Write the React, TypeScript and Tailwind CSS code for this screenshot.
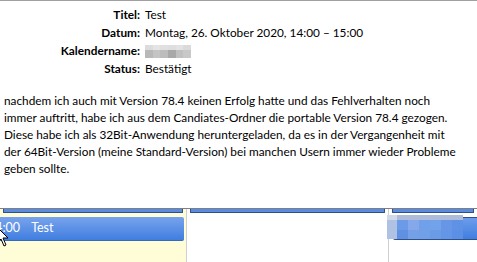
import React from 'react'

const font = { fontFamily: 'Lato, "Noto Sans", sans-serif' }

function Row({ label, children }: { label: string; children: React.ReactNode }) {
  return (
    <div className="flex h-[18px] items-center">
      <div className="w-[144px] shrink-0 pr-[4px] text-right font-bold">{label}</div>
      <div className="pl-[1px]">{children}</div>
    </div>
  )
}

function Pixelated() {
  const top = ['#dcdcdc', '#e4e4e4', '#e0e0e0', '#dedede', '#e2e2e2', '#dadada']
  const bottom = ['#b8b8b8', '#c4c4c4', '#bcbcbc', '#a8a8a8', '#c0c0c0', '#c8c8c8']
  return (
    <div className="flex h-[13px] w-[46px] flex-col">
      <div className="flex h-[5px]">
        {top.map((c, i) => (
          <div key={i} className="h-full w-[8px]" style={{ background: c }} />
        ))}
      </div>
      <div className="flex h-[8px]">
        {bottom.map((c, i) => (
          <div key={i} className="h-full w-[8px]" style={{ background: c }} />
        ))}
      </div>
    </div>
  )
}

function AllDayStrip() {
  return <div className="mx-[3px] h-[4px] rounded-b-[1px] border border-t-0 border-[#2d4f8a] bg-[#5a8be0]" />
}

export default function App() {
  const blurTop = ['#d2d9e8', '#aebbd9', '#aebbd9', '#aebbd9', '#aebbd9', '#aebbd9', '#aebbd9']
  const blurMid = ['#b0c2e4', '#6b9ae8', '#84a8ea', '#70a0ea', '#72a2ea', '#6796e6', '#5f92e6']
  const blurBot = ['#b0c2e4', '#5f90e2', '#74a0e6', '#72a0e8', '#6c9be6', '#6396e6', '#5b90e6']
  return (
    <div className="relative h-[262px] w-[477px] overflow-hidden bg-white text-[11.8px] text-black" style={font}>
      <div className="h-[1px] bg-[#a0a0a0]" />
      <div className="pt-[5px]">
        <Row label="Titel:">Test</Row>
        <Row label="Datum:">Montag, 26. Oktober 2020, 14:00 – 15:00</Row>
        <Row label="Kalendername:">
          <Pixelated />
        </Row>
        <Row label="Status:">Bestätigt</Row>
      </div>
      <div className="mt-[14px] h-[116px] whitespace-nowrap px-[4px] leading-[17px]">
        <p>nachdem ich auch mit Version 78.4 keinen Erfolg hatte und das Fehlverhalten noch</p>
        <p>immer auftritt, habe ich aus dem Candiates-Ordner die portable Version 78.4 gezogen.</p>
        <p>Diese habe ich als 32Bit-Anwendung heruntergeladen, da es in der Vergangenheit mit</p>
        <p>der 64Bit-Version (meine Standard-Version) bei manchen Usern immer wieder Probleme</p>
        <p>geben sollte.</p>
      </div>

      <div className="flex h-[54px] border-t border-[#808080]">
        <div className="w-[186px] shrink-0 bg-[#fffcd8]">
          <AllDayStrip />
          <div className="mt-[4px] mr-[2px] flex h-[24px] items-center overflow-hidden rounded-r-[2px] border-b border-[#3a68b8] bg-gradient-to-b from-[#78a3ec] to-[#3f7ee0] text-[12.5px] text-white">
            <span className="ml-[-12px]">14:00</span>
            <span className="ml-[11px]">Test</span>
          </div>
        </div>
        <div className="w-px bg-[#d0d0d0]" />
        <div className="w-[201px] shrink-0 bg-white">
          <AllDayStrip />
        </div>
        <div className="w-px bg-[#d0d0d0]" />
        <div className="relative flex-1 bg-white">
          <AllDayStrip />
          <div className="mt-[4px] ml-[4px] h-[23px] rounded-l-[2px] border-t border-b border-[#2d4f8a] bg-gradient-to-b from-[#6d9ceb] to-[#3f7ee0]" />
          <div className="absolute left-[-2px] top-[6px] flex flex-col">
            <div className="flex h-[5px]">
              {blurTop.map((c, i) => (
                <div key={i} className={i === 0 ? 'h-full w-[10px]' : 'h-full w-[11px]'} style={{ background: c }} />
              ))}
            </div>
            <div className="flex h-[10px]">
              {blurMid.map((c, i) => (
                <div key={i} className={i === 0 ? 'h-full w-[10px]' : 'h-full w-[11px]'} style={{ background: c }} />
              ))}
            </div>
            <div className="flex h-[9px]">
              {blurBot.map((c, i) => (
                <div key={i} className={i === 0 ? 'h-full w-[10px]' : 'h-full w-[11px]'} style={{ background: c }} />
              ))}
            </div>
          </div>
        </div>
      </div>

      <svg className="absolute left-[-4px] top-[226px]" width="14" height="22" viewBox="0 0 14 22">
        <path d="M1 1 L1 17 L5 13 L8 20 L10 19 L7 12 L12 12 Z" fill="#ffffff" stroke="#000000" strokeWidth="1" />
      </svg>
    </div>
  )
}
